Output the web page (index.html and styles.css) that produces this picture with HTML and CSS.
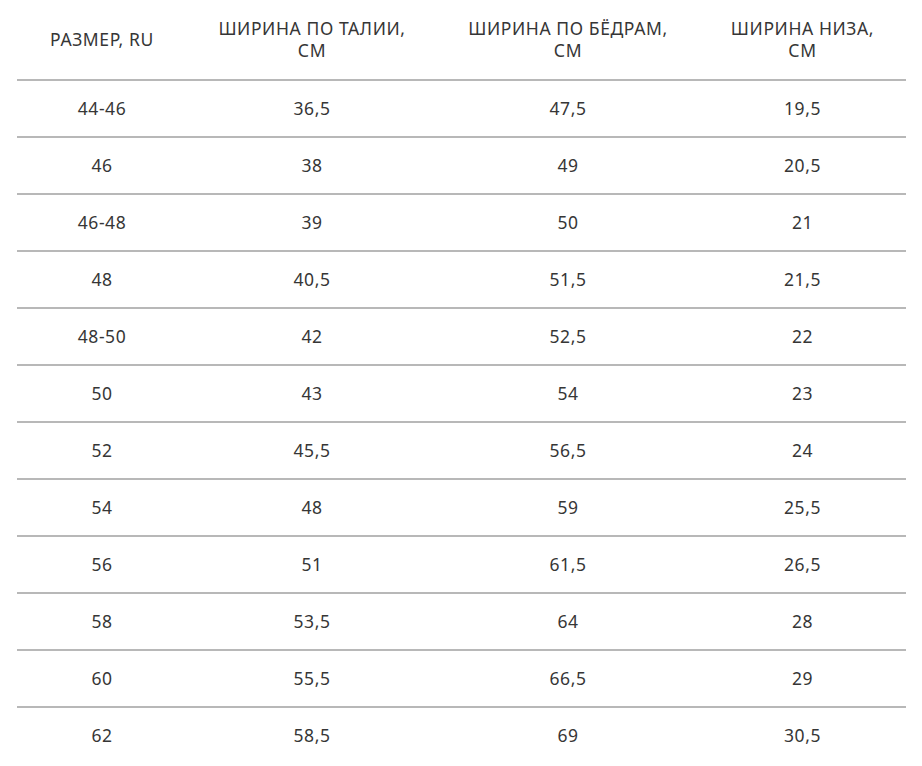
FILE: index.html
```html
<!DOCTYPE html>
<html lang="ru">
<head>
<meta charset="utf-8">
<link rel="stylesheet" href="styles.css">
</head>
<body>
<table class="sizes">
  <colgroup>
    <col class="c1"><col class="c2"><col class="c3"><col class="c4">
  </colgroup>
  <thead>
    <tr><th>РАЗМЕР, RU</th><th>ШИРИНА ПО ТАЛИИ,<br>СМ</th><th>ШИРИНА ПО БЁДРАМ,<br>СМ</th><th>ШИРИНА НИЗА,<br>СМ</th></tr>
  </thead>
  <tbody>
    <tr><td>44-46</td><td>36,5</td><td>47,5</td><td>19,5</td></tr>
    <tr><td>46</td><td>38</td><td>49</td><td>20,5</td></tr>
    <tr><td>46-48</td><td>39</td><td>50</td><td>21</td></tr>
    <tr><td>48</td><td>40,5</td><td>51,5</td><td>21,5</td></tr>
    <tr><td>48-50</td><td>42</td><td>52,5</td><td>22</td></tr>
    <tr><td>50</td><td>43</td><td>54</td><td>23</td></tr>
    <tr><td>52</td><td>45,5</td><td>56,5</td><td>24</td></tr>
    <tr><td>54</td><td>48</td><td>59</td><td>25,5</td></tr>
    <tr><td>56</td><td>51</td><td>61,5</td><td>26,5</td></tr>
    <tr><td>58</td><td>53,5</td><td>64</td><td>28</td></tr>
    <tr><td>60</td><td>55,5</td><td>66,5</td><td>29</td></tr>
    <tr><td>62</td><td>58,5</td><td>69</td><td>30,5</td></tr>
  </tbody>
</table>
</body>
</html>
```

FILE: styles.css
```css
html, body {
  margin: 0;
  padding: 0;
  background: #ffffff;
}
body {
  padding: 0 16px 0 17px;
  font-family: "Noto Sans", "Open Sans", sans-serif;
  color: #363636;
}
.sizes {
  width: 889px;
  border-collapse: collapse;
  table-layout: fixed;
}
.c1 { width: 170px; }
.c2 { width: 250px; }
.c3 { width: 262px; }
.c4 { width: 207px; }
.sizes th {
  height: 77px;
  padding: 0 0 2px;
  font-weight: 400;
  font-size: 17.5px;
  letter-spacing: 0.6px;
  line-height: 22px;
  text-align: center;
  vertical-align: middle;
}
.sizes td {
  height: 53px;
  padding: 0 0 2px;
  font-size: 17.5px;
  letter-spacing: 0.6px;
  line-height: 22px;
  text-align: center;
  vertical-align: middle;
  border-top: 2px solid #b8b8b8;
}
```
